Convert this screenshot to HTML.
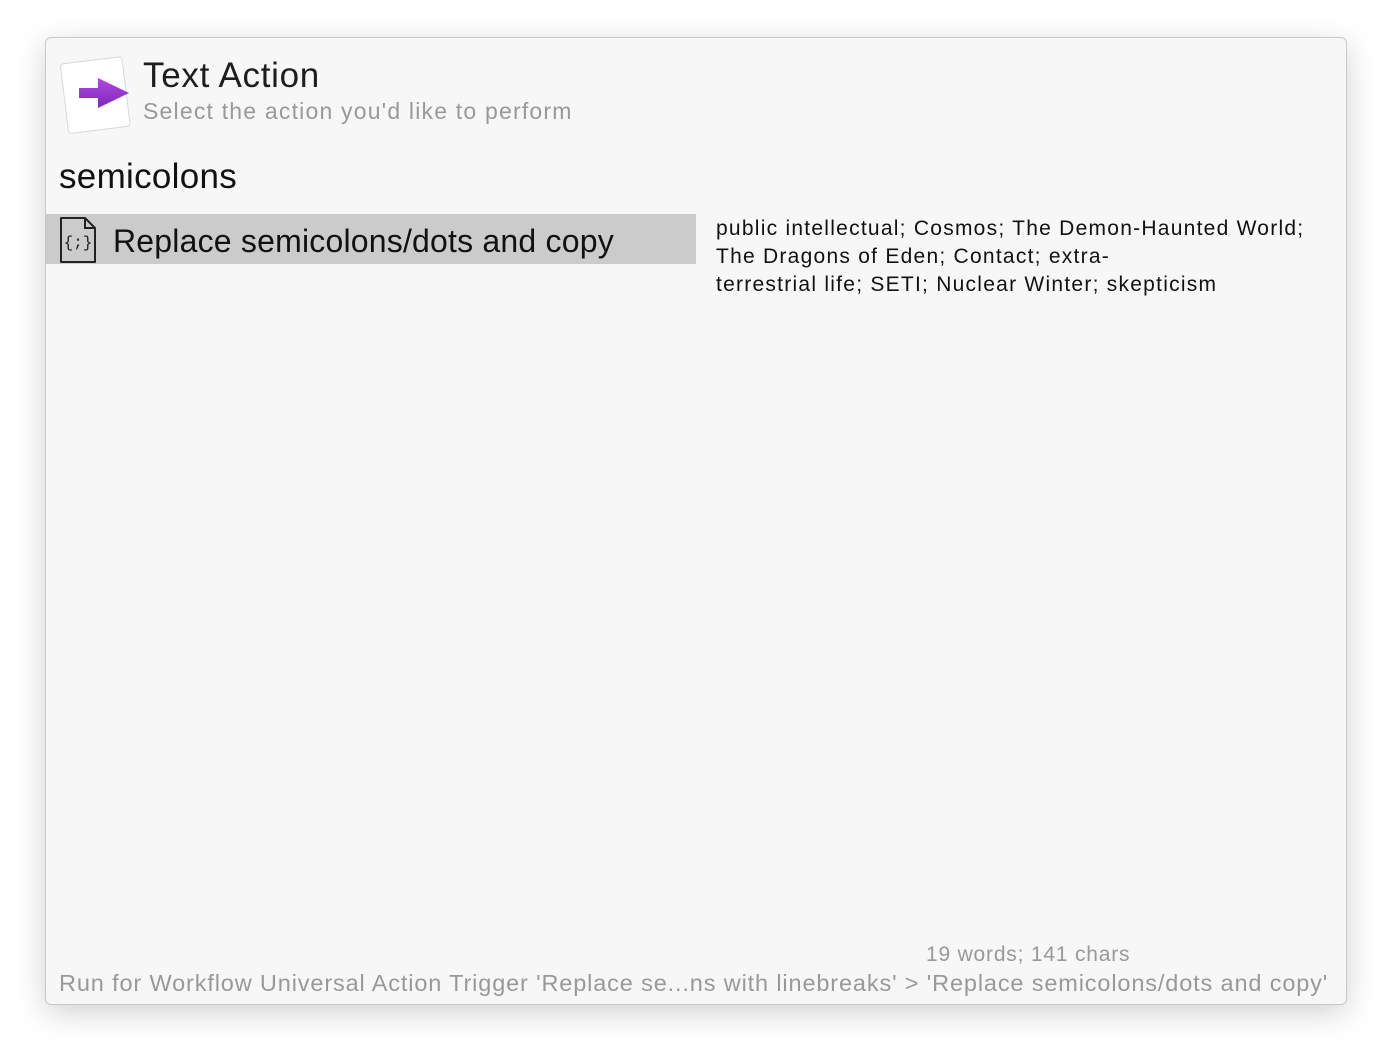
<!DOCTYPE html>
<html><head><meta charset="utf-8"><style>
body{margin:0;width:1392px;height:1058px;background:#fff;font-family:"Liberation Sans",sans-serif;position:relative;overflow:hidden}
.win{position:absolute;left:45px;top:37px;width:1300px;height:966px;background:#f7f7f7;border:1px solid #c8c8c8;border-radius:6px;box-shadow:0 8px 30px rgba(0,0,0,.18)}
.t{position:absolute;white-space:nowrap}
</style></head><body>
<div class="win"></div>
<svg class="t" style="left:58px;top:52px" width="76" height="82" viewBox="0 0 76 82">
<defs><linearGradient id="g" x1="0" y1="0" x2="0" y2="1"><stop offset="0" stop-color="#b247e0"/><stop offset="1" stop-color="#7a2ab8"/></linearGradient></defs>
<g transform="rotate(-7 38 41)"><rect x="6" y="8" width="62" height="70" rx="3" fill="#fff" stroke="#d8d8d8"/></g>
<path d="M21 36 H40 V26 L71 41 L40 56 V46 H21 Z" fill="url(#g)"/>
</svg>
<div class="t" style="left:143px;top:56px;font-size:35px;color:#1e1e1e;letter-spacing:0.7px">Text Action</div>
<div class="t" style="left:143px;top:98px;font-size:23px;color:#999;letter-spacing:1.2px">Select the action you'd like to perform</div>
<div class="t" style="left:59px;top:157px;font-size:35px;color:#111;letter-spacing:0.3px">semicolons</div>
<div class="t" style="left:46px;top:214px;width:650px;height:50px;background:#cbcbcb"></div>
<svg class="t" style="left:58px;top:216px" width="40" height="48" viewBox="0 0 40 48">
<path d="M3 2 H27 L37 12 V46 H3 Z" fill="none" stroke="#222" stroke-width="2" stroke-linejoin="round"/>
<path d="M27 2 V12 H37" fill="none" stroke="#222" stroke-width="2"/>
<text x="20" y="31" font-size="16" text-anchor="middle" font-family="Liberation Mono" fill="#222">{;}</text>
</svg>
<div class="t" style="left:113px;top:223px;font-size:32px;color:#111;letter-spacing:0.2px">Replace semicolons/dots and copy</div>
<div class="t" style="left:716px;top:215px;font-size:21px;line-height:28px;color:#111;letter-spacing:1.25px">public intellectual; Cosmos; The Demon-Haunted World;<br>The Dragons of Eden; Contact; extra-<br>terrestrial life; SETI; Nuclear Winter; skepticism</div>
<div class="t" style="left:926px;top:943px;font-size:21px;color:#999;letter-spacing:0.8px">19 words; 141 chars</div>
<div class="t" style="left:59px;top:970px;font-size:23.5px;color:#999;letter-spacing:0.86px">Run for Workflow Universal Action Trigger 'Replace se...ns with linebreaks' &gt; 'Replace semicolons/dots and copy'</div>
</body></html>
